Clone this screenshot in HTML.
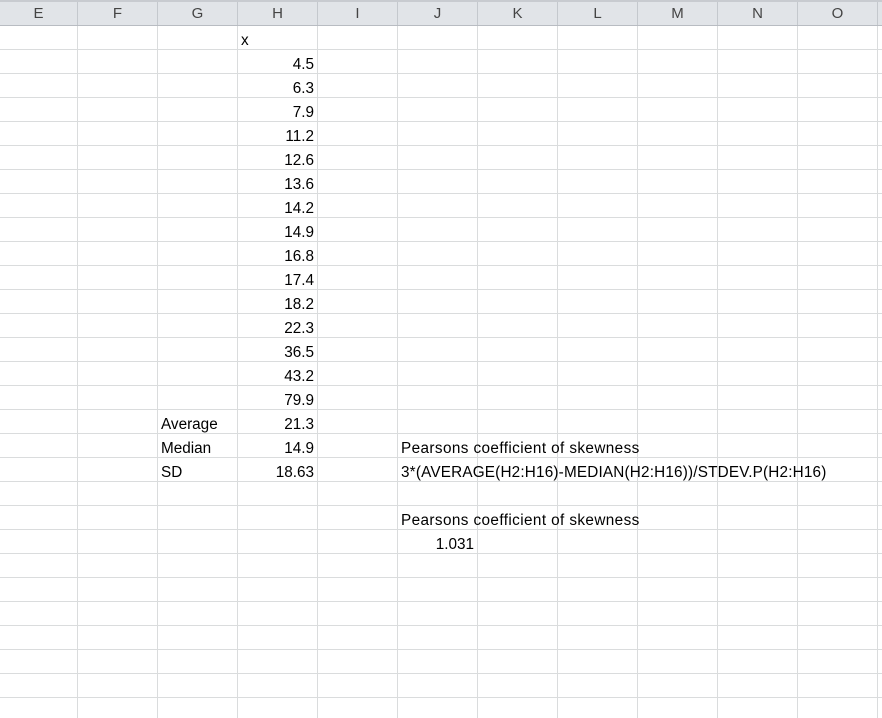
<!DOCTYPE html>
<html><head><style>
body{margin:0;width:882px;height:718px;overflow:hidden;background:#fff;font-family:"Liberation Sans",sans-serif;position:relative}
.hdr{position:absolute;left:0;top:0;width:882px;height:26px;background:#e1e4e8;border-top:2px solid #c8cbd0;box-sizing:border-box;border-bottom:1px solid #b8bcc2}
.h{position:absolute;top:2px;height:23px;line-height:24px;text-align:center;font-size:15px;color:#444;border-right:1px solid #c4c8cd;box-sizing:border-box}
.grid{position:absolute;left:0;top:26px;width:882px;height:692px;
background-image:linear-gradient(to right,transparent 76px,#dadcdd 76px,#dadcdd 77px,transparent 77px),linear-gradient(to bottom,transparent 23px,#dadcdd 23px);
background-size:80px 24px,882px 24px;background-position:1px 0,0 0}
.c{position:absolute;height:24px;line-height:30px;font-size:15.3px;color:#000;white-space:nowrap}
.r{text-align:right;width:76px}
.w{letter-spacing:0.4px}
</style></head><body>
<div class="hdr"></div>
<div class="h" style="left:0;width:78px">E</div>
<div class="h" style="left:78px;width:80px">F</div>
<div class="h" style="left:158px;width:80px">G</div>
<div class="h" style="left:238px;width:80px">H</div>
<div class="h" style="left:318px;width:80px">I</div>
<div class="h" style="left:398px;width:80px">J</div>
<div class="h" style="left:478px;width:80px">K</div>
<div class="h" style="left:558px;width:80px">L</div>
<div class="h" style="left:638px;width:80px">M</div>
<div class="h" style="left:718px;width:80px">N</div>
<div class="h" style="left:798px;width:80px">O</div>
<div class="grid"></div>
<div class="c" style="left:241px;top:26px">x</div>
<div class="c r" style="left:238px;top:50px">4.5</div>
<div class="c r" style="left:238px;top:74px">6.3</div>
<div class="c r" style="left:238px;top:98px">7.9</div>
<div class="c r" style="left:238px;top:122px">11.2</div>
<div class="c r" style="left:238px;top:146px">12.6</div>
<div class="c r" style="left:238px;top:170px">13.6</div>
<div class="c r" style="left:238px;top:194px">14.2</div>
<div class="c r" style="left:238px;top:218px">14.9</div>
<div class="c r" style="left:238px;top:242px">16.8</div>
<div class="c r" style="left:238px;top:266px">17.4</div>
<div class="c r" style="left:238px;top:290px">18.2</div>
<div class="c r" style="left:238px;top:314px">22.3</div>
<div class="c r" style="left:238px;top:338px">36.5</div>
<div class="c r" style="left:238px;top:362px">43.2</div>
<div class="c r" style="left:238px;top:386px">79.9</div>
<div class="c" style="left:161px;top:410px">Average</div>
<div class="c r" style="left:238px;top:410px">21.3</div>
<div class="c" style="left:161px;top:434px">Median</div>
<div class="c r" style="left:238px;top:434px">14.9</div>
<div class="c" style="left:161px;top:458px">SD</div>
<div class="c r" style="left:238px;top:458px">18.63</div>
<div class="c w" style="left:401px;top:434px">Pearsons coefficient of skewness</div>
<div class="c" style="left:401px;top:458px;letter-spacing:0.18px">3*(AVERAGE(H2:H16)-MEDIAN(H2:H16))/STDEV.P(H2:H16)</div>
<div class="c w" style="left:401px;top:506px">Pearsons coefficient of skewness</div>
<div class="c r" style="left:398px;top:530px">1.031</div>
</body></html>
